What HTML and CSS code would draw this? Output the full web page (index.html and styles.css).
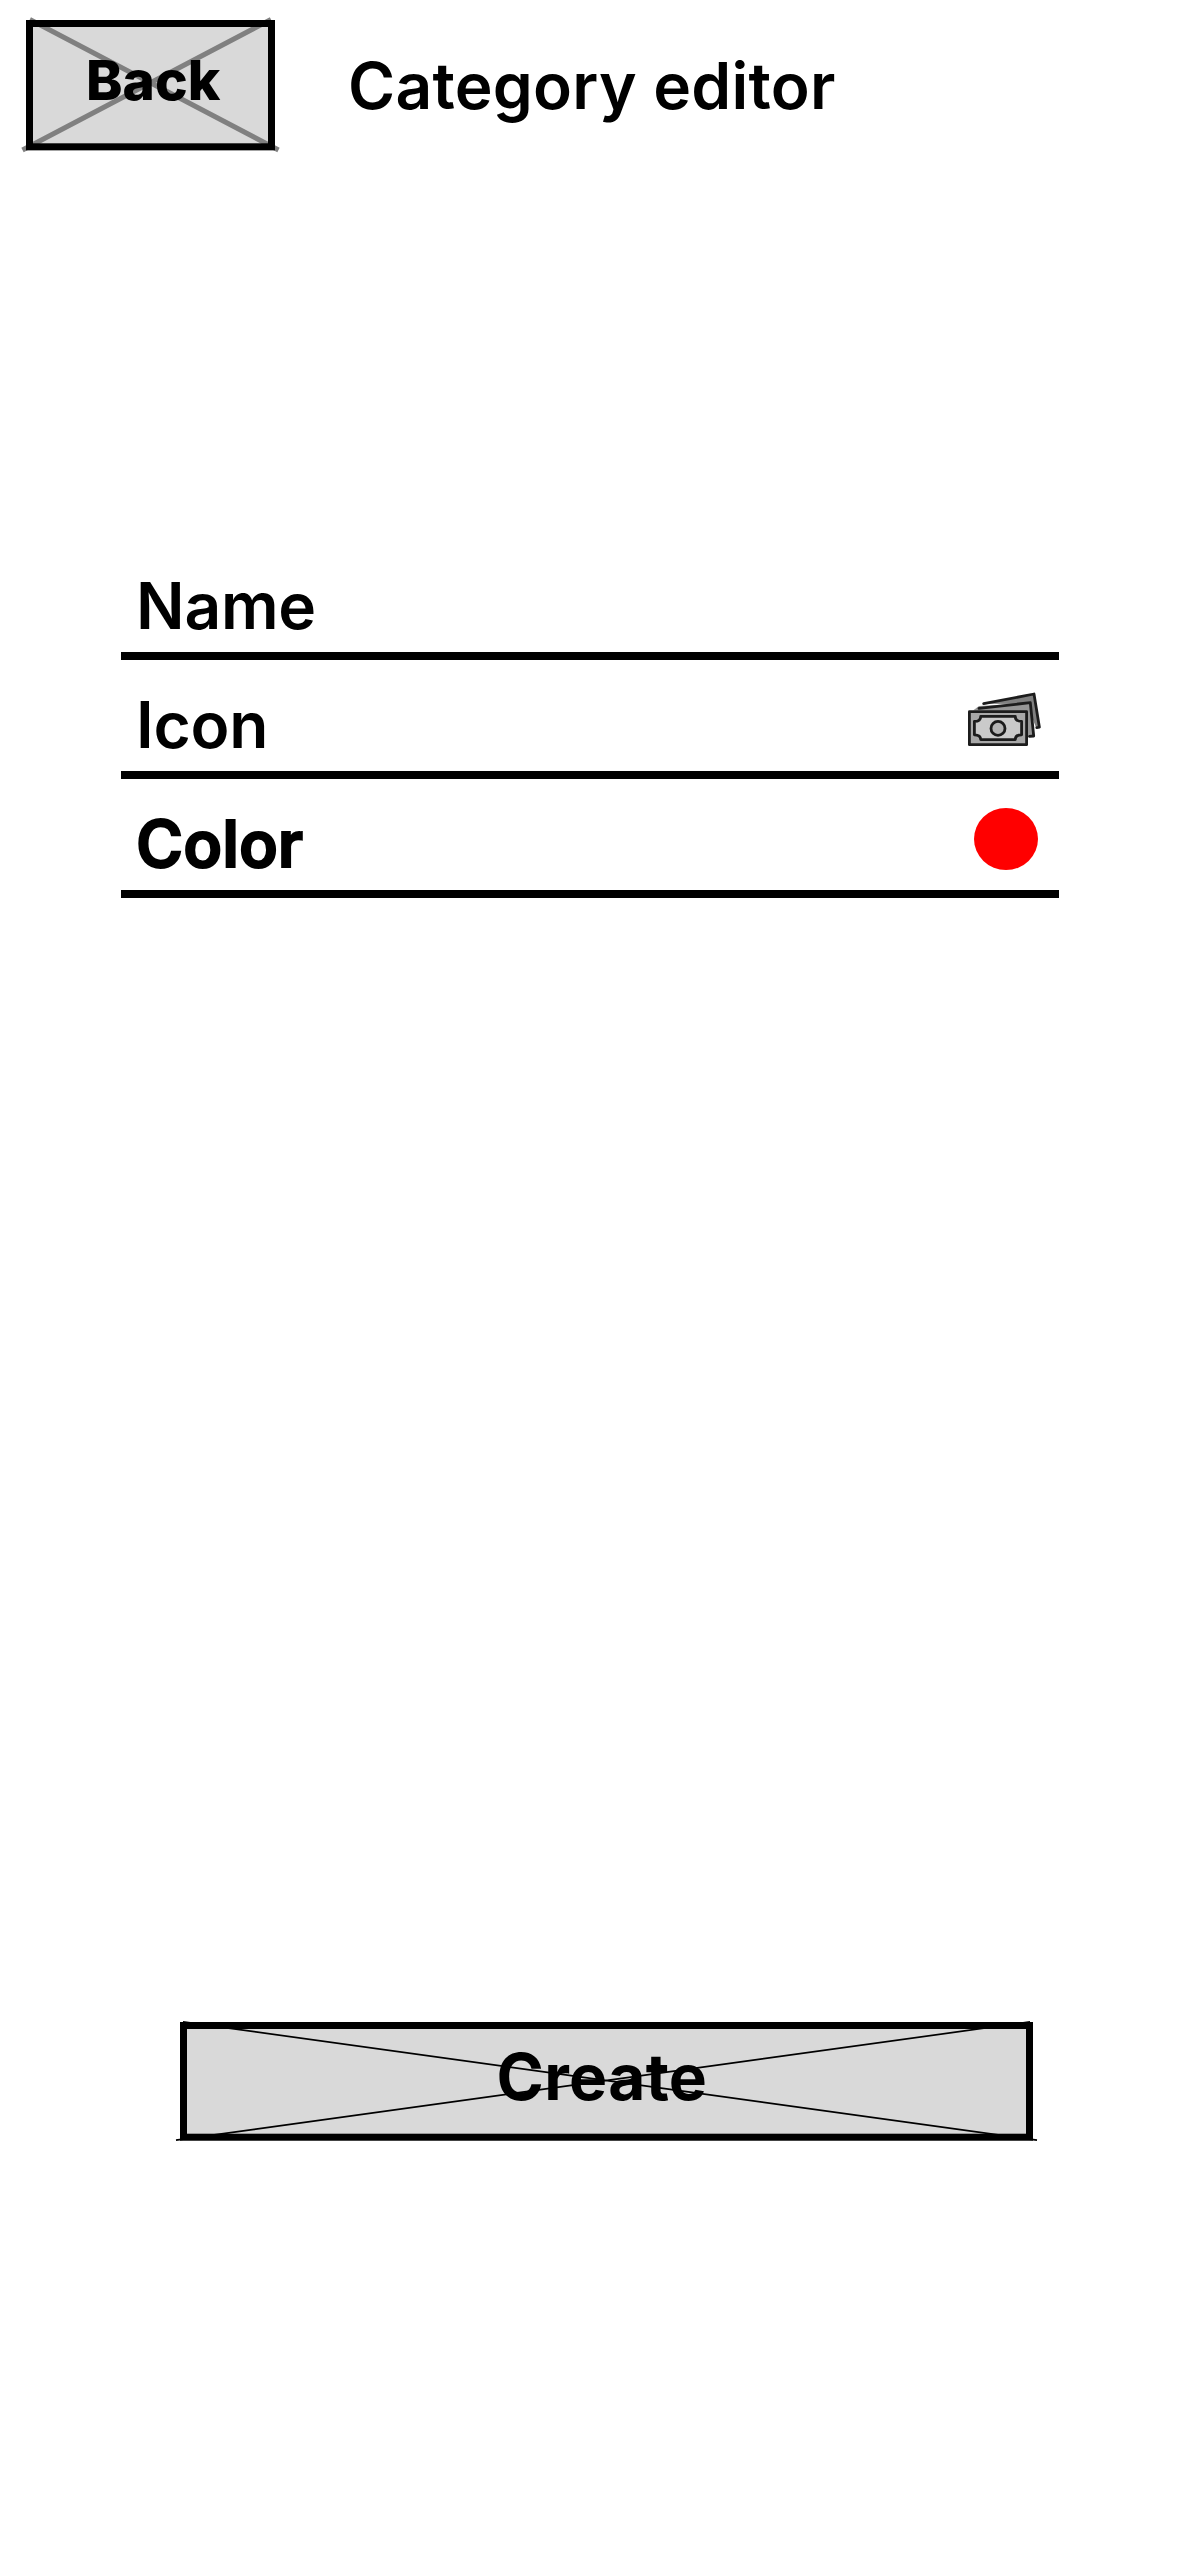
FILE: index.html
```html
<!DOCTYPE html>
<html lang="en">
<head>
<meta charset="utf-8">
<title>Category editor</title>
<link rel="stylesheet" href="styles.css">
</head>
<body>
<main class="screen">
  <header class="header">
    <button class="button button-back" type="button">
      <svg class="button-frame" viewBox="0 0 249 131" aria-hidden="true">
        <rect width="249" height="130.6" fill="#d9d9d9"/>
        <path d="M3.8-.5 252.500 130M245-.5-3.500 130" stroke="#808080" stroke-width="5"/>
        <rect x="3.5" y="3.5" width="242" height="123.3" fill="none" stroke="#000" stroke-width="7"/>
      </svg>
      <span class="button-label">Back</span>
    </button>
    <h1 class="title">Category editor</h1>
  </header>
  <section class="fields">
    <div class="field"><span class="field-label">Name</span></div>
    <div class="field">
      <span class="field-label">Icon</span>
      <svg class="money" viewBox="0 0 76 56" aria-hidden="true">
        <g stroke="#1c1c1c" stroke-width="2.8" stroke-linejoin="round" stroke-linecap="round">
          <path d="M16.500 12.700 67 3 72.500 36 69 36.500 60 13Z" fill="#808080" stroke="none"/>
          <path d="M16.700 12.700 67 3 72.400 36.200 69.800 36.700" fill="none"/>
          <path d="M6 19.500 12 15 63 12 67 45 61 46 58 21Z" fill="#969696" stroke="none"/>
          <path d="M12 17.300 63.300 11.700 66.700 45 62.500 45.400" fill="none"/>
          <path d="M2.400 20.700h57.200v33H2.400z" fill="#a8a8a8"/>
          <path d="M13.700 25.400h34.600c0 3 2.300 5 6.300 5v13.400c-4 0-6.300 1.800-6.300 4.800H13.700c0-3-2.300-4.800-6.300-4.800V30.400c4 0 6.300-2 6.300-5z" fill="#cacaca"/>
          <circle cx="31" cy="37.400" r="7" fill="#b5b5b5"/>
        </g>
      </svg>
    </div>
    <div class="field"><span class="field-label field-label-strong">Color</span><span class="swatch"></span></div>
  </section>
  <button class="button button-create" type="button">
    <svg class="button-frame" viewBox="0 0 853 119" aria-hidden="true">
      <rect width="853" height="118.7" fill="#d9d9d9"/>
      <path d="M3-.2 857 118.200M850-.2-4 118.200" stroke="#000" stroke-width="1.7"/>
      <rect x="3.5" y="3.5" width="846" height="111.700" fill="none" stroke="#000" stroke-width="7"/>
    </svg>
    <span class="button-label">Create</span>
  </button>
</main>
</body>
</html>
```
FILE: styles.css
```css
* {
  box-sizing: border-box;
}

body {
  margin: 0;
  background: #fff;
  color: #000;
  font-family: Inter, "Liberation Sans", sans-serif;
}

.screen {
  display: flex;
  flex-direction: column;
  min-height: 2556px;
}

.header {
  display: flex;
  align-items: flex-start;
  height: 541px;
  padding: 20px 0 0 26px;
}

.title {
  margin: 27px 0 0 73px;
  font-size: 64px;
  font-weight: 600;
  line-height: 77px;
  letter-spacing: 0.25px;
  white-space: nowrap;
}

.button {
  position: relative;
  flex: none;
  padding: 0;
  border: 0;
  background: none;
  color: inherit;
  font-family: inherit;
  text-align: left;
}

.button-frame {
  position: absolute;
  inset: 0;
  width: 100%;
  height: 100%;
  overflow: visible;
}

.button-label {
  position: relative;
  display: block;
}

.button-back {
  width: 249px;
  height: 131px;
  padding: 0 0 11px 60px;
  font-size: 55px;
  font-weight: 800;
  line-height: 66px;
}

.button-create {
  width: 853px;
  height: 119px;
  margin: 1124px 0 0 180px;
  padding: 0 0 10px 316.5px;
  font-size: 64px;
  font-weight: 700;
  line-height: 77px;
  letter-spacing: 0.35px;
}

.fields {
  width: 938px;
  margin-left: 121px;
}

.field {
  display: flex;
  justify-content: space-between;
  align-items: flex-start;
  height: 119px;
  border-bottom: 8px solid #000;
}

.field-label {
  padding: 26px 0 0 15px;
  font-size: 64px;
  font-weight: 600;
  line-height: 77px;
  letter-spacing: -0.2px;
}

.field-label-strong {
  letter-spacing: 0;
  -webkit-text-stroke: 1.8px #000;
}

.money {
  width: 76px;
  height: 56px;
  margin: 31px 16px 0 0;
  overflow: visible;
}

.swatch {
  width: 64px;
  height: 62px;
  margin: 29px 21px 0 0;
  border-radius: 50%;
  background: #f00;
}
```
